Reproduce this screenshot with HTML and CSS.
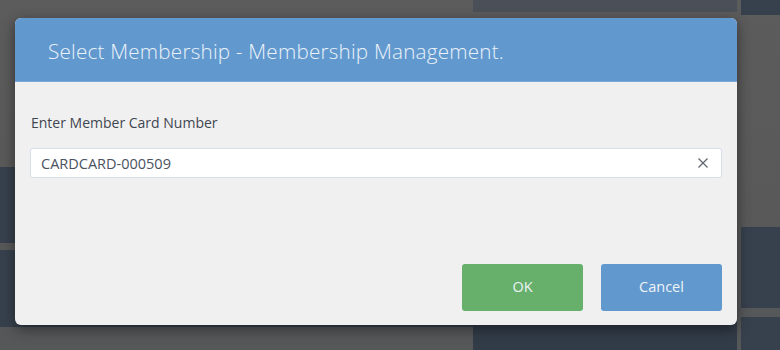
FILE: index.html
```html
<!DOCTYPE html>
<html lang="en">
<head>
    <meta charset="UTF-8">
    <meta name="viewport" content="width=device-width, initial-scale=1.0">
    <title>Select Membership</title>
    <link rel="stylesheet" href="styles.css">
</head>
<body>

    <!-- dimmed app behind the dialog -->
    <div class="backdrop">
        <div class="tile tile-top"></div>
        <div class="tile tile-corner"></div>
        <div class="tile tile-left-a"></div>
        <div class="tile tile-left-b"></div>
        <div class="tile tile-right-a"></div>
        <div class="tile tile-right-b"></div>
        <div class="tile tile-bottom"></div>
    </div>

    <div class="modal">
        <div class="modal-header">
            <h1>Select Membership - Membership Management.</h1>
        </div>

        <div class="modal-body">
            <label for="cardNumber">Enter Member Card Number</label>
            <div class="input-wrap">
                <input type="text" id="cardNumber" value="CARDCARD-000509">
                <button class="clear" onclick="clearCard()" aria-label="Clear">
                    <svg width="12" height="12" viewBox="0 0 12 12">
                        <path d="M1.5 1.5 L10.5 10.5 M10.5 1.5 L1.5 10.5" stroke="#5f6670" stroke-width="1.3" fill="none"/>
                    </svg>
                </button>
            </div>
        </div>

        <div class="modal-footer">
            <button class="btn btn-ok">OK</button>
            <button class="btn btn-cancel">Cancel</button>
        </div>
    </div>

    <script>
        function clearCard() {
            document.getElementById("cardNumber").value = "";
        }
    </script>

</body>
</html>
```

FILE: styles.css
```css
body {
    font-family: "Open Sans", "Liberation Sans", sans-serif;
    margin: 0;
    padding: 0;
    background-color: #5a5a5a;
    overflow: hidden;
}

.backdrop {
    display: grid;
    grid-template-columns: 473px 264px 43px;
    grid-template-rows: 12px 155px 60px 81px 42px;
    height: 350px;
    background: linear-gradient(to bottom, #5c5c5c, #595959 60%, #555759);
}

.tile {
    background-color: #37414d;
}

.tile-top {
    grid-column: 2;
    grid-row: 1;
    background-color: #4b5058;
}

.tile-corner {
    grid-column: 3;
    grid-row: 1;
    margin-left: 4px;
    margin-bottom: -3px;
}

.tile-left-a {
    grid-column: 1;
    grid-row: 3;
    margin-bottom: -16px;
}

.tile-left-b {
    grid-column: 1;
    grid-row: 4 / 6;
    margin-top: 23px;
    margin-bottom: 23px;
}

.tile-right-a {
    grid-column: 3;
    grid-row: 4;
    margin-left: 4px;
}

.tile-right-b {
    grid-column: 3;
    grid-row: 5;
    margin-left: 4px;
    margin-top: 9px;
}

.tile-bottom {
    grid-column: 2;
    grid-row: 5;
    margin-top: 7px;
    background-color: #323c48;
}

.modal {
    position: absolute;
    left: 15px;
    top: 18px;
    width: 722px;
    height: 307px;
    background-color: #f0f0f0;
    border-radius: 6px;
    box-shadow: 0 4px 14px rgba(0, 0, 0, 0.45);
    display: flex;
    flex-direction: column;
    overflow: hidden;
}

.modal-header {
    height: 63px;
    background-color: #6199cf;
    border-bottom: 1px solid #79a9d8;
    display: flex;
    align-items: center;
    padding-left: 33px;
    padding-top: 2px;
    box-sizing: border-box;
    height: 64px;
}

h1 {
    margin: 0;
    font-size: 20.7px;
    font-weight: 300;
    color: #eaf1f8;
    letter-spacing: 0.2px;
}

.modal-body {
    padding: 31px 15px 0 15px;
}

label {
    display: block;
    font-size: 14px;
    line-height: 20px;
    color: #3f4650;
    padding-left: 1px;
    margin-bottom: 15px;
}

.input-wrap {
    position: relative;
}

input[type="text"] {
    box-sizing: border-box;
    width: 100%;
    height: 30px;
    padding: 0 40px 0 10px;
    border: 1px solid #d6e0ec;
    border-radius: 3px;
    background-color: #fff;
    font-family: inherit;
    font-size: 14.5px;
    color: #4a5260;
    outline: none;
}

.clear {
    position: absolute;
    right: 13px;
    top: 9px;
    padding: 0;
    border: none;
    background: none;
    cursor: pointer;
    line-height: 0;
}

.modal-footer {
    margin-top: auto;
    padding: 0 15px 14px 0;
    display: flex;
    justify-content: flex-end;
    gap: 18px;
}

.btn {
    width: 121px;
    height: 47px;
    padding: 0 0 3px 0;
    border: none;
    border-radius: 3px;
    font-family: inherit;
    font-size: 14.5px;
    color: #eef3f7;
    cursor: pointer;
}

.btn-ok {
    background-color: #66b06c;
}

.btn-cancel {
    background-color: #6199cf;
}
```
